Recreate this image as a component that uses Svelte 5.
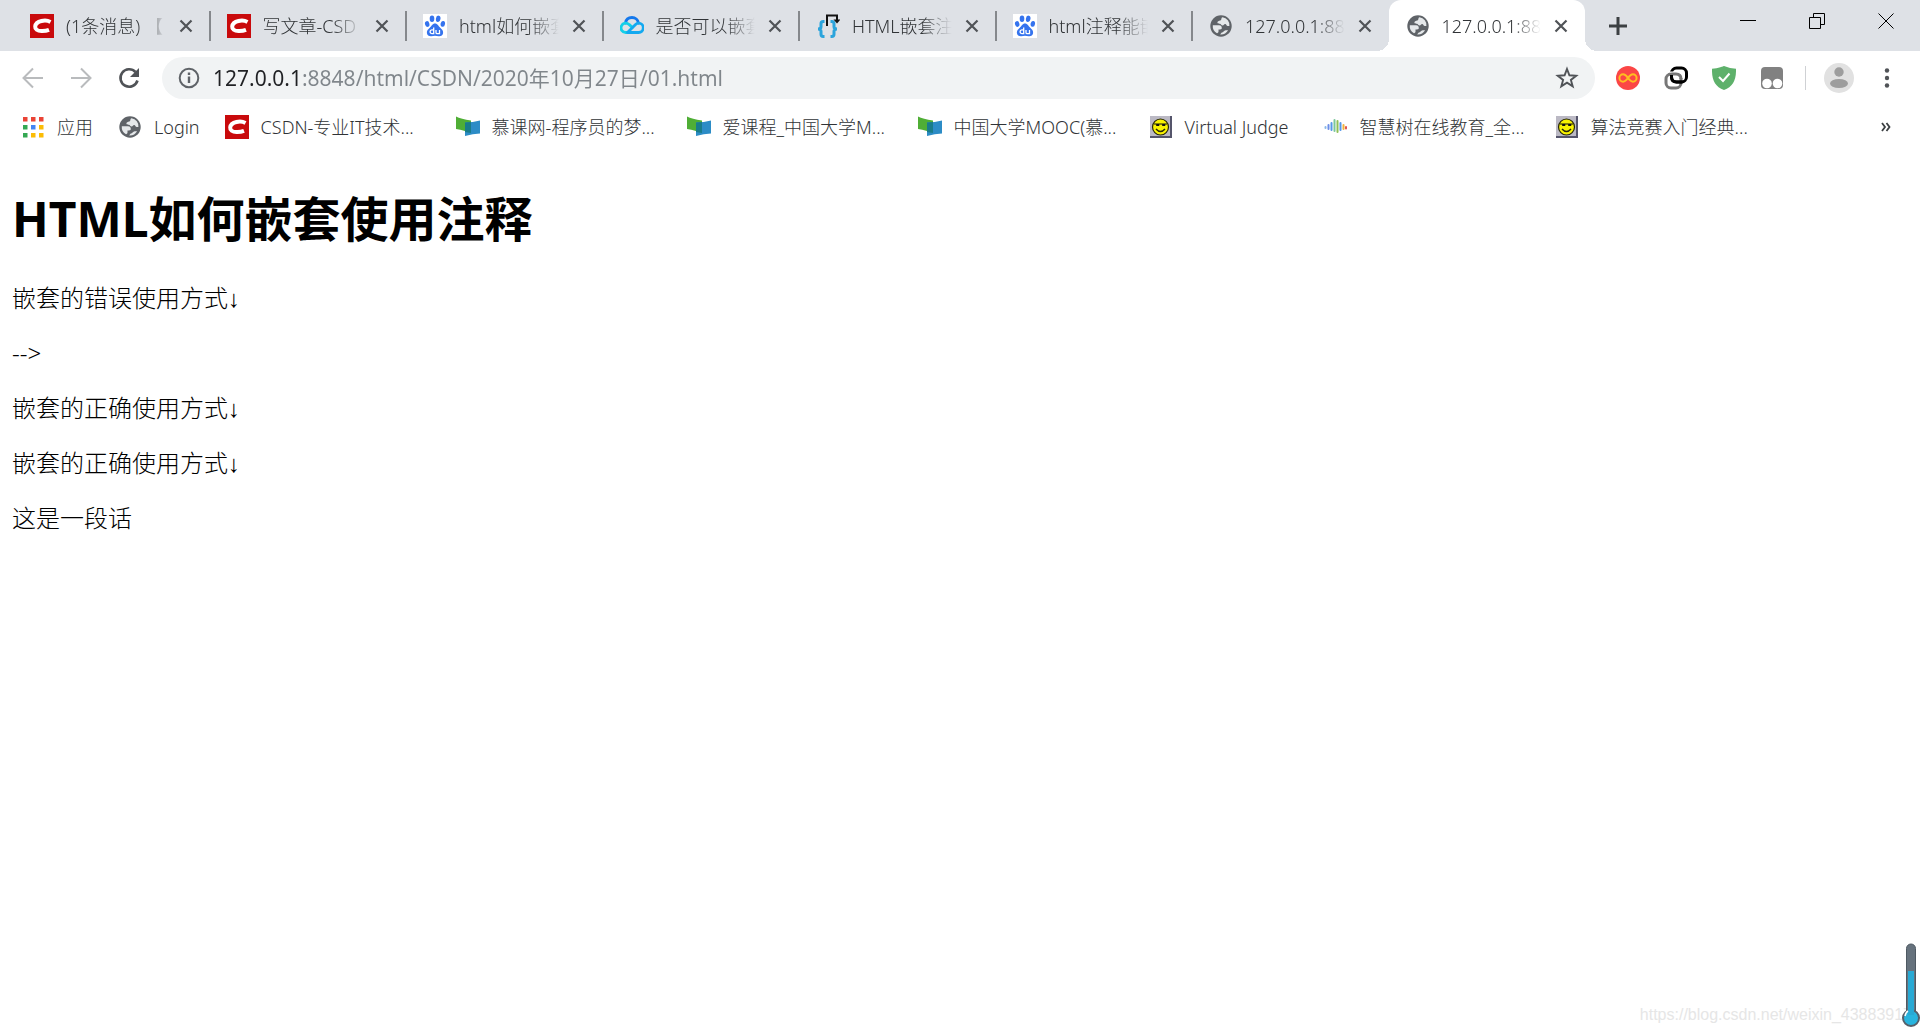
<script lang="ts">
	interface Tab {
		icon: string,
		title: string
	}

	interface Bookmark {
		icon: string,
		text: string,
		size?: string
	}

	let tabs: Tab[] = [
		{ icon: "csdn", title: "(1条消息) 【" },
		{ icon: "csdn", title: "写文章-CSD" },
		{ icon: "baidu", title: "html如何嵌套" },
		{ icon: "cloud", title: "是否可以嵌套" },
		{ icon: "braces", title: "HTML嵌套注" },
		{ icon: "baidu", title: "html注释能嵌" },
		{ icon: "globe", title: "127.0.0.1:88" },
		{ icon: "globe", title: "127.0.0.1:88" }
	]

	const bookmarks: Bookmark[] = [
		{ icon: "apps", text: "应用" },
		{ icon: "globe", text: "Login" },
		{ icon: "csdn", text: "CSDN-专业IT技术...", size: "wide" },
		{ icon: "mooc", text: "慕课网-程序员的梦...", size: "wide" },
		{ icon: "mooc", text: "爱课程_中国大学M...", size: "wide" },
		{ icon: "mooc", text: "中国大学MOOC(慕...", size: "wide" },
		{ icon: "smile", text: "Virtual Judge", size: "medium" },
		{ icon: "tree", text: "智慧树在线教育_全...", size: "wide" },
		{ icon: "smile", text: "算法竞赛入门经典...", size: "wide" }
	]

	const paragraphs = [
		"嵌套的错误使用方式↓",
		"-->",
		"嵌套的正确使用方式↓",
		"嵌套的正确使用方式↓",
		"这是一段话"
	]

	const appColors = ["#ea4335", "#ea4335", "#ea4335", "#34a853", "#4285f4", "#fbbc05", "#34a853", "#fbbc05", "#fbbc05"]

	let active = 7
	let url = "127.0.0.1:8848/html/CSDN/2020年10月27日/01.html"

	function closeTab(index: number) {
		tabs = [...tabs.slice(0, index), ...tabs.slice(index + 1)]
		if (active >= index && active > 0)
			active = active - 1
	}

	function addTab() {
		tabs = [...tabs, { icon: "globe", title: "新标签页" }]
		active = tabs.length - 1
	}
</script>

{#snippet icon(name: string)}
	<svg class="icon" viewBox="0 0 24 24" aria-hidden="true">
		{#if name == "csdn"}
			<rect width="24" height="24" fill="#c90a0c" />
			<path d="M20.500 7.900C18 6.600 14.500 6.300 11.500 7C7.900 7.800 5.500 9.900 5.200 12.400C4.900 15.100 7.400 17 11.500 17.100C14.200 17.200 16.700 16.800 19 15.900" fill="none" stroke="#fff" stroke-width="4" />
		{:else if name == "baidu"}
			<rect width="24" height="24" fill="#fff" />
			<g fill="#3473ee">
				<ellipse cx="9" cy="4.800" rx="2.300" ry="3.200" />
				<ellipse cx="15.200" cy="4.800" rx="2.300" ry="3.200" transform="rotate(8 15.200 4.800)" />
				<ellipse cx="4.200" cy="10" rx="2.200" ry="2.900" transform="rotate(-15 4.200 10)" />
				<ellipse cx="19.800" cy="9.800" rx="2.200" ry="2.900" transform="rotate(10 19.800 9.800)" />
				<path d="M12 9.500c2.600 0 3.500 2.600 5.200 4.300 1.700 1.600 3.200 2.900 2.900 5.200-.3 2.400-2.200 3.400-4.400 3.200-1.300-.2-2.400-.5-3.700-.5s-2.400.3-3.700.5c-2.200.2-4.100-.8-4.400-3.200-.3-2.300 1.200-3.600 2.900-5.200C8.500 12.100 9.400 9.500 12 9.500z" />
			</g>
			<path d="M10.700 13.500v6.200H9a1.900 1.900 0 0 1 0-3.800h1.700M13 16v2.500q0 1.200 1.200 1.200h2.300V16" fill="none" stroke="#fff" stroke-width="1.300" />
		{:else if name == "cloud"}
			<g fill="none" stroke-width="2.800" stroke-linecap="round" stroke-linejoin="round">
				<path d="M5.500 9C6 5.400 8.700 3.500 12 3.500s6 2.300 6.500 5.500" stroke="#1478ec" />
				<path d="M8 18.500H5.700A4.700 4.700 0 1 1 9 10.400l3.300 3" stroke="#13cfe8" />
				<path d="M7.500 18.500L15.300 10.700c1-1 2-1.500 3.300-1.500a4.600 4.600 0 0 1 0 9.300z" stroke="#13a9f0" />
			</g>
		{:else if name == "braces"}
			<g fill="none" stroke="#2ba4dc" stroke-width="3">
				<path d="M8.500 7.500H7.200q-2.200 0-2.200 2.200v3q0 2.300-3 2.300 3 0 3 2.300v3q0 2.200 2.200 2.200h1.300M14.500 7.500h1.300q2.200 0 2.200 2.200v3q0 2.300 3 2.300-3 0-3 2.300v3q0 2.200-2.200 2.200h-1.300" />
			</g>
			<path d="M11 12V1.500h10V6" fill="none" stroke="#111" stroke-width="2" />
			<path d="M17.500 5.500h7L21 9.500z" fill="#111" />
		{:else if name == "globe"}
			<circle cx="12" cy="12" r="10.700" fill="#5f6368" />
			<path d="M13.500 3.200c-1.800.7-.4 2.600-2.200 3.300-1.500.6-2.900.5-2.900 2.100 0 1.200 1.200 1.100 2.400 1.100 1.500 0 1.300 1.800 2.800 1.800s1.100-1.600 2.600-1.600c1.300 0 1.100 2.100 2.600 2.100h1.600a7.800 7.800 0 0 0-6.900-8.800z" fill="#e5e8ea" />
			<path d="M3.800 11.200h6.300c2 0 2.700 1.400 2.700 2.700 0 1.700-1.900 1.600-3.300 1.600v2c0 1-.7 1.400-1.500 1.800A8.400 8.400 0 0 1 3.800 11.200zM11.200 20.400l1.200-1.700c2.200 0 2.300-2.500 4.300-2.500h2.400a8.400 8.400 0 0 1-7.900 4.200z" fill="#e5e8ea" />
		{:else if name == "apps"}
			{#each appColors as color, i}
				<rect x={2 + (i % 3) * 8} y={2 + Math.floor(i / 3) * 8} width="4.500" height="4.500" fill={color} />
			{/each}
		{:else if name == "mooc"}
			<path d="M0 1.500Q5 4 15 5.500v12.500l-6-2Q4 14.500 0 14z" fill="#4fae35" />
			<path d="M9 7.500q8 0 15-2v13q-7 0-15 2.500z" fill="#2c8cc6" />
			<path d="M9 7.500l6-.6V18l-6-1z" fill="#187c8a" />
		{:else if name == "smile"}
			<path d="M1 1h22v22H1z" fill="#55556b" />
			<path d="M1 1h20v20H1z" fill="#bbb9c4" />
			<circle cx="11.500" cy="12" r="8" fill="#f8f300" stroke="#26260c" stroke-width="1.200" />
			<path d="M5 9h13" stroke="#111" />
			<path d="M7.500 9.500h2.500v1h-2.500zM13.500 9.500h2.500v1h-2.500z" fill="#111" stroke="#111" />
			<path d="M7 14q4.500 5 9 0" fill="none" stroke="#26260c" stroke-width="1.500" />
		{:else if name == "tree"}
			<g fill="none" stroke-width="2" stroke-linecap="round">
				<path d="M1.500 12v1" stroke="#89b9e8" />
				<path d="M4.500 10v4" stroke="#6c8ee8" />
				<path d="M7.500 8v7M16.500 8v7" stroke="#5598e8" />
				<path d="M10.500 5v11" stroke="#7cc79a" />
				<path d="M13.500 6v11" stroke="#8fbf56" />
				<path d="M19.500 10v4" stroke="#f0b43c" />
				<path d="M22 12v1.500" stroke="#e0564e" />
			</g>
		{/if}
	</svg>
{/snippet}

<div class="browser">
	<header>
		<div class="tabstrip">
			<div class="tabs">
				{#each tabs as tab, i}
					<div class="tab" class:active={i == active} class:divided={i != active && i + 1 != active}>
						<button class="select" on:click={() => active = i}>
							{@render icon(tab.icon)}
							<span class="title">{tab.title}</span>
						</button>
						<button class="close" aria-label="关闭" on:click={() => closeTab(i)}>
							<svg viewBox="0 0 14 14"><path d="M1.500 1.500l11 11M12.500 1.500l-11 11" stroke="#505357" stroke-width="2.200" /></svg>
						</button>
					</div>
				{/each}
			</div>
			<div class="controls">
				<button class="add" aria-label="新标签页" on:click={addTab}>
					<svg viewBox="0 0 18 18"><path d="M9 0v18M0 9h18" stroke="#3c4043" stroke-width="3" /></svg>
				</button>
				<div class="window-buttons">
					<button aria-label="最小化">
						<svg viewBox="0 0 16 16"><path d="M0 7.500h16" stroke="#000" /></svg>
					</button>
					<button aria-label="还原">
						<svg viewBox="0 0 16 16"><path d="M.5 4.500h11v11H.5zM4.500 4V.5h11v11H12" fill="none" stroke="#000" /></svg>
					</button>
					<button aria-label="关闭窗口">
						<svg viewBox="0 0 16 16"><path d="M.5.5l15 15M15.500.5l-15 15" stroke="#000" /></svg>
					</button>
				</div>
			</div>
		</div>

		<div class="toolbar">
			<button class="tool" aria-label="后退">
				<svg viewBox="0 0 24 24"><path d="M22 12H3M12 2.500L2.500 12l9.500 9.500" fill="none" stroke="#b9bbbd" stroke-width="2" /></svg>
			</button>
			<button class="tool" aria-label="前进">
				<svg viewBox="0 0 24 24"><path d="M2 12h19M12 2.500l9.500 9.500-9.500 9.500" fill="none" stroke="#b9bbbd" stroke-width="2" /></svg>
			</button>
			<button class="tool" aria-label="重新加载">
				<svg viewBox="0 0 24 24">
					<path d="M20.500 14.500A8.700 8.700 0 1 1 18.500 6" fill="none" stroke="#505357" stroke-width="2.600" />
					<path d="M22 2v9h-9z" fill="#505357" />
				</svg>
			</button>
			<div class="omnibox">
				<svg class="info" viewBox="0 0 22 22">
					<circle cx="11" cy="11" r="9.300" fill="none" stroke="#5f6368" stroke-width="2" />
					<path d="M11 9.500V16M11 5.500V8" stroke="#5f6368" stroke-width="2.400" />
				</svg>
				<input type="text" aria-label="地址栏" bind:value={url} />
				<button class="star" aria-label="添加书签">
					<svg viewBox="0 0 24 24"><path d="M12 3l2.400 6.300 6.800.4-5.300 4.200 1.800 6.500L12 16.700l-5.700 3.700 1.800-6.500-5.300-4.200 6.800-.4z" fill="none" stroke="#505357" stroke-width="1.900" /></svg>
				</button>
			</div>
			<button class="tool" aria-label="Infinity">
				<svg viewBox="0 0 24 24">
					<circle cx="12" cy="12" r="12" fill="#fb4646" />
					<path d="M12 12C10.200 9.500 9 8.300 7.100 8.300a3.700 3.700 0 0 0 0 7.400C9 15.700 10.200 14.500 12 12s3-3.700 4.900-3.700a3.700 3.700 0 0 1 0 7.400C15 15.700 13.800 14.500 12 12z" fill="none" stroke="#ffbd20" stroke-width="2" />
				</svg>
			</button>
			<button class="tool" aria-label="链接">
				<svg viewBox="0 0 24 24" fill="none" stroke-width="3">
					<rect x="2" y="8" width="15" height="14" rx="5" stroke="#777" />
					<rect x="7.500" y="2" width="15" height="14" rx="5" stroke="#000" />
					<path d="M6 8h6q5 0 5 4" stroke="#fff" stroke-width="5" />
					<path d="M5 8.500Q6 8 8 8h4q5 0 5 5" stroke="#777" />
					<path d="M7.500 9v2q0 5 5 5h6" stroke="#000" />
				</svg>
			</button>
			<button class="tool" aria-label="防护">
				<svg viewBox="0 0 24 24">
					<path d="M12 0q6 2.500 12 2.700C24.300 14 21 20.500 12 24 3 20.500-.3 14 0 2.700 6 2.500 12 0 12 0z" fill="#5eb16b" />
					<path d="M7 11l4 4 6.500-7.500" fill="none" stroke="#fff" stroke-width="2" />
				</svg>
			</button>
			<button class="tool" aria-label="脚本">
				<svg viewBox="0 0 24 24">
					<rect x="1" y="1" width="22" height="22" rx="4" fill="#818181" />
					<circle cx="7" cy="17.500" r="4.800" fill="#fff" />
					<circle cx="17.500" cy="17.500" r="4.800" fill="#fff" />
				</svg>
			</button>
			<span class="separator"></span>
			<button class="tool profile" aria-label="用户">
				<svg viewBox="0 0 30 30">
					<circle cx="15" cy="15" r="15" fill="#e1e1e1" />
					<circle cx="15" cy="9" r="4.700" fill="#9d9d9d" />
					<ellipse cx="15" cy="20.500" rx="9" ry="4.500" fill="#9d9d9d" />
				</svg>
			</button>
			<button class="tool" aria-label="菜单">
				<svg viewBox="0 0 24 24" fill="#505357">
					<circle cx="12" cy="4.500" r="2.200" /><circle cx="12" cy="12" r="2.200" /><circle cx="12" cy="19.500" r="2.200" />
				</svg>
			</button>
		</div>

		<nav>
			{#each bookmarks as bookmark}
				<a href="#top" class:wide={bookmark.size == "wide"} class:medium={bookmark.size == "medium"}>{@render icon(bookmark.icon)}<span>{bookmark.text}</span></a>
			{/each}
			<button class="more" aria-label="更多书签">
				<svg viewBox="0 0 10 10"><path d="M1 1l3 4-3 4M5.500 1l3 4-3 4" fill="none" stroke="#3c4043" stroke-width="1.800" /></svg>
			</button>
		</nav>
	</header>

	<main>
		<h1>HTML如何嵌套使用注释</h1>
		{#each paragraphs as text}
			<p>{text}</p>
		{/each}
	</main>

	<span class="watermark">https://blog.csdn.net/weixin_43883917</span>
	<svg class="thermometer" viewBox="0 0 18 86" aria-hidden="true">
		<rect x="4.500" y="1" width="9" height="72" rx="4.500" fill="#66727d" stroke="#4e5962" />
		<circle cx="9" cy="75" r="8" fill="#28b4de" stroke="#55606a" stroke-width="2" />
		<path d="M6 28h6v44H6z" fill="#28a9d4" />
		<path d="M3 73q1-4 3-5" fill="none" stroke="#fff" stroke-width="1.500" />
	</svg>
</div>

<style>
	:global(body) {
		background-color: white;
	}

	.browser {
		position: relative;
		min-height: 100vh;
		font-family: "Noto Sans", "Liberation Sans", "Noto Sans CJK SC", sans-serif;
		font-size: 18px;
		font-weight: 300;
		color: #303336;
		overflow: hidden;
	}

	button {
		display: flex;
		align-items: center;
		justify-content: center;
		padding: 0;
		border: none;
		background: none;
		font: inherit;
		color: inherit;
	}

	.icon {
		flex: none;
		width: 24px;
		height: 24px;
	}

	.tabstrip {
		display: flex;
		height: 51px;
		padding-left: 13px;
		background-color: #dee1e6;
	}

	.tabs {
		flex: 1;
		display: flex;
		min-width: 0;
	}

	.tab {
		flex: 1;
		min-width: 0;
		position: relative;
		display: flex;
		align-items: center;
		padding: 0 12px 0 17px;
	}

	.tab.divided::after {
		content: "";
		position: absolute;
		right: -1px;
		top: 11px;
		width: 2px;
		height: 30px;
		background-color: #85888c;
	}

	.tab.active {
		background-color: white;
		border-radius: 12px 12px 0 0;
	}

	.tab.active::before,
	.tab.active::after {
		content: "";
		position: absolute;
		bottom: 0;
		width: 12px;
		height: 12px;
	}

	.tab.active::before {
		left: -12px;
		background: radial-gradient(circle at 0 0, transparent 12px, white 12px);
	}

	.tab.active::after {
		right: -12px;
		background: radial-gradient(circle at 100% 0, transparent 12px, white 12px);
	}

	.select {
		flex: 1;
		min-width: 0;
		gap: 12px;
	}

	.title {
		flex: 1;
		overflow: hidden;
		white-space: nowrap;
		text-align: left;
		line-height: 26px;
		-webkit-mask-image: linear-gradient(to right, black 70%, transparent);
		mask-image: linear-gradient(to right, black 70%, transparent);
	}

	.close {
		width: 24px;
		height: 24px;
		margin-left: 8px;
	}

	.close svg {
		width: 14px;
		height: 14px;
	}

	.controls {
		flex: none;
		display: flex;
		justify-content: space-between;
		width: 335px;
	}

	.add {
		width: 66px;
	}

	.add svg {
		width: 18px;
		height: 18px;
	}

	.window-buttons {
		display: flex;
		height: 42px;
	}

	.window-buttons button {
		width: 69px;
	}

	.window-buttons svg {
		width: 16px;
		height: 16px;
	}

	.toolbar {
		display: flex;
		align-items: center;
		height: 53px;
		padding: 0 9px;
	}

	.tool {
		flex: none;
		width: 48px;
		height: 42px;
	}

	.tool svg {
		width: 24px;
		height: 24px;
	}

	.tool.profile svg {
		width: 30px;
		height: 30px;
	}

	.omnibox {
		flex: 1;
		min-width: 0;
		display: flex;
		align-items: center;
		height: 42px;
		margin: 0 9px;
		padding: 0 16px;
		border-radius: 21px;
		background-color: #f1f3f4;
	}

	.info {
		flex: none;
		width: 22px;
		height: 22px;
	}

	/* host part is dark, the rest of the address is grey */
	input {
		flex: 1;
		min-width: 0;
		margin-left: 13px;
		padding: 0;
		border: none;
		outline: none;
		font: inherit;
		font-size: 21px;
		font-weight: 400;
		line-height: 32px;
		color: transparent;
		caret-color: black;
		background: linear-gradient(to right, #202124 89px, #80868b 89px);
		-webkit-background-clip: text;
		background-clip: text;
	}

	.star svg {
		width: 24px;
		height: 24px;
	}

	.separator {
		width: 1px;
		height: 24px;
		margin: 0 9px;
		background-color: #cfd1d4;
	}

	nav {
		display: flex;
		align-items: center;
		gap: 25px;
		height: 46px;
		padding: 0 28px 0 21px;
	}

	nav a {
		flex: none;
		display: flex;
		align-items: center;
		gap: 12px;
		color: inherit;
		line-height: 26px;
		text-decoration: none;
		white-space: nowrap;
	}

	nav a.wide {
		width: 206px;
	}

	nav a.medium {
		width: 150px;
	}

	.more {
		margin-left: auto;
	}

	.more svg {
		width: 12px;
		height: 10px;
	}

	main {
		padding: 36px 12px;
		color: black;
		font-size: 24px;
	}

	h1 {
		margin: 0 0 30px;
		font-size: 48px;
		font-weight: 700;
		line-height: 66px;
	}

	p {
		margin: 0 0 24px;
		line-height: 31px;
	}

	.watermark {
		position: absolute;
		right: 8px;
		bottom: 10px;
		font-family: "Liberation Sans", sans-serif;
		font-size: 16px;
		line-height: 18px;
		color: #e6e6e6;
	}

	.thermometer {
		position: absolute;
		right: 0;
		bottom: 5px;
		width: 18px;
		height: 86px;
	}
</style>
